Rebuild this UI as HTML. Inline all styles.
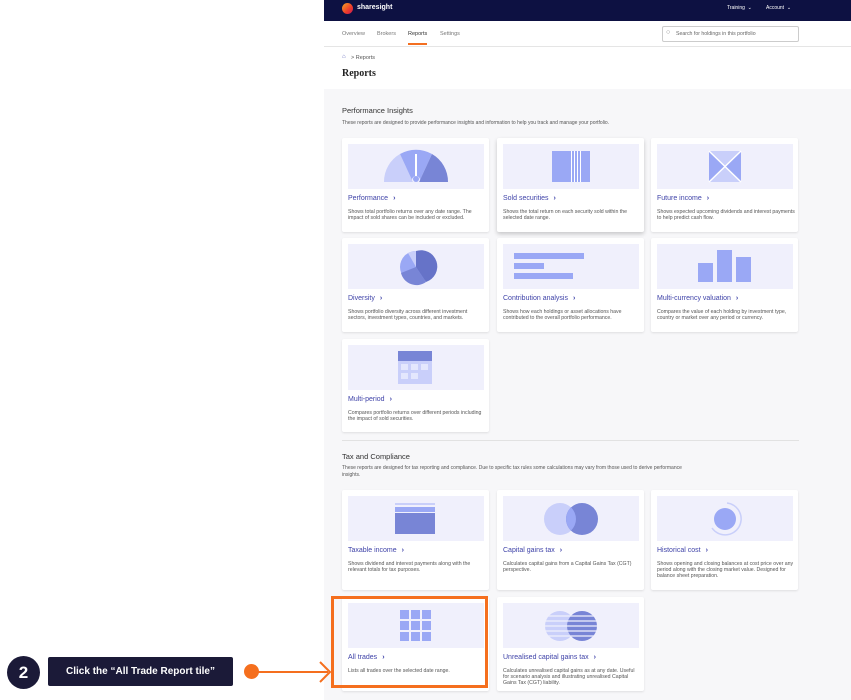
<!DOCTYPE html>
<html><head><meta charset="utf-8"><style>
*{margin:0;padding:0;box-sizing:border-box}
body{width:851px;height:700px;background:#fff;position:relative;overflow:hidden;font-family:"Liberation Sans",sans-serif}
.a{position:absolute}
.card{position:absolute;width:147px;background:#fff;border-radius:2px;box-shadow:0 1px 2px rgba(0,0,0,.1)}
.img{position:absolute;left:6px;top:6px;width:136px;height:45px;background:#f0f0fc}
.img svg{width:136px;height:45px;display:block}
.t{position:absolute;left:6px;top:57px;font-size:7px;color:#3f43a8;white-space:nowrap}
.t b{font-weight:bold;margin-left:5px;font-size:7px}
.d{position:absolute;left:6px;top:71px;width:138px;font-size:5.2px;line-height:6.2px;color:#555}
</style></head><body>
<div class="a" style="left:324px;top:0;width:527px;height:21px;background:#0d1142"></div>
<div class="a" style="left:342px;top:3px;width:11px;height:11px;border-radius:50%;background:linear-gradient(135deg,#f5a623,#ee3c2b 60%,#c2185b)"></div>
<div class="a" style="left:357px;top:4px;font-size:7px;color:#fff;font-weight:bold">sharesight</div>
<div class="a" style="left:727px;top:5px;font-size:5px;color:#fff">Training &nbsp;⌄</div>
<div class="a" style="left:766px;top:5px;font-size:5px;color:#fff">Account &nbsp;⌄</div>
<div class="a" style="left:324px;top:21px;width:527px;height:26px;border-bottom:1px solid #e5e5e5"></div>
<div class="a" style="left:342px;top:31px;font-size:5.5px;color:#777">Overview</div>
<div class="a" style="left:377px;top:31px;font-size:5.5px;color:#777">Brokers</div>
<div class="a" style="left:408px;top:31px;font-size:5.5px;color:#333">Reports</div>
<div class="a" style="left:408px;top:43px;width:19px;height:2px;background:#f36f21"></div>
<div class="a" style="left:440px;top:31px;font-size:5.5px;color:#777">Settings</div>
<div class="a" style="left:662px;top:26px;width:137px;height:16px;border:1px solid #ccc;border-radius:2px"></div>
<div class="a" style="left:666px;top:29px;font-size:7px;color:#888">○</div>
<div class="a" style="left:676px;top:31px;font-size:5.2px;color:#666">Search for holdings in this portfolio</div>
<div class="a" style="left:342px;top:54px;font-size:6px;color:#6a6fc0">⌂</div>
<div class="a" style="left:351px;top:55px;font-size:5.5px;color:#555">&gt; Reports</div>
<div class="a" style="left:342px;top:68px;font-size:10px;color:#222;font-weight:bold;font-family:'Liberation Serif',serif">Reports</div>
<div class="a" style="left:324px;top:89px;width:527px;height:611px;background:#f7f7f9"></div>
<div class="a" style="left:342px;top:106px;font-size:7.5px;color:#333">Performance Insights</div>
<div class="a" style="left:342px;top:120px;font-size:5px;color:#555">These reports are designed to provide performance insights and information to help you track and manage your portfolio.</div>
<div class="a" style="left:342px;top:440px;width:457px;height:1px;background:#e2e2e2"></div>
<div class="a" style="left:342px;top:452px;font-size:7.5px;color:#333">Tax and Compliance</div>
<div class="a" style="left:342px;top:465px;width:345px;font-size:5px;line-height:7px;color:#555">These reports are designed for tax reporting and compliance. Due to specific tax rules some calculations may vary from those used to derive performance insights.</div>

<div class="card" style="left:342px;top:138px;height:94px"><div class="img"><svg viewBox="0 0 136 45"><path d="M36 38 A32 32 0 0 1 52 10 L64 36 A3 3 0 0 0 65 38Z" fill="#c9cffa"/><path d="M52 10 A32 32 0 0 1 84 10 L72 36 A4 4 0 0 0 64 36Z" fill="#9aa8f5"/><path d="M84 10 A32 32 0 0 1 100 38 L71 38 A3 3 0 0 0 72 36Z" fill="#7885d6"/><rect x="67" y="10" width="2" height="24" fill="#fff"/><circle cx="68" cy="35" r="3" fill="#9aa8f5"/></svg></div><div class="t">Performance<b>›</b></div><div class="d">Shows total portfolio returns over any date range. The impact of sold shares can be included or excluded.</div></div>
<div class="card" style="left:497px;top:138px;height:94px;box-shadow:0 2px 4px rgba(0,0,0,.2)"><div class="img"><svg viewBox="0 0 136 45"><rect x="49" y="7" width="38" height="31" fill="#9aa8f5"/><rect x="68" y="7" width="1" height="31" fill="#fff"/><rect x="71" y="7" width="1" height="31" fill="#fff"/><rect x="74" y="7" width="1" height="31" fill="#fff"/><rect x="77" y="7" width="1" height="31" fill="#fff"/></svg></div><div class="t">Sold securities<b>›</b></div><div class="d">Shows the total return on each security sold within the selected date range.</div></div>
<div class="card" style="left:651px;top:138px;height:94px"><div class="img"><svg viewBox="0 0 136 45"><rect x="52" y="7" width="32" height="31" fill="#c9cffa"/><path d="M52 7 L68 22 L52 38Z M84 7 L68 22 L84 38Z" fill="#9aa8f5"/><path d="M52 7 L84 38 M84 7 L52 38" stroke="#fff" stroke-width="1.5"/></svg></div><div class="t">Future income<b>›</b></div><div class="d">Shows expected upcoming dividends and interest payments to help predict cash flow.</div></div>

<div class="card" style="left:342px;top:238px;height:94px"><div class="img"><svg viewBox="0 0 136 45"><circle cx="68" cy="23" r="16" fill="#9aa8f5"/><path d="M68 23 L68 7 A16 16 0 0 1 78 38Z" fill="#6673c8"/><path d="M68 23 L78 38 A16 16 0 0 1 53 29Z" fill="#7885d6"/><path d="M68 23 L60 9 A16 16 0 0 1 68 7Z" fill="#c9cffa"/></svg></div><div class="t">Diversity<b>›</b></div><div class="d">Shows portfolio diversity across different investment sectors, investment types, countries, and markets.</div></div>
<div class="card" style="left:497px;top:238px;height:94px"><div class="img"><svg viewBox="0 0 136 45"><rect x="11" y="9" width="70" height="6" fill="#9aa8f5"/><rect x="11" y="19" width="30" height="6" fill="#9aa8f5"/><rect x="11" y="29" width="59" height="6" fill="#9aa8f5"/></svg></div><div class="t">Contribution analysis<b>›</b></div><div class="d">Shows how each holdings or asset allocations have contributed to the overall portfolio performance.</div></div>
<div class="card" style="left:651px;top:238px;height:94px"><div class="img"><svg viewBox="0 0 136 45"><rect x="41" y="19" width="15" height="19" fill="#9aa8f5"/><rect x="60" y="6" width="15" height="32" fill="#9aa8f5"/><rect x="79" y="13" width="15" height="25" fill="#9aa8f5"/></svg></div><div class="t">Multi-currency valuation<b>›</b></div><div class="d">Compares the value of each holding by investment type, country or market over any period or currency.</div></div>

<div class="card" style="left:342px;top:339px;height:93px"><div class="img"><svg viewBox="0 0 136 45"><rect x="50" y="6" width="34" height="33" fill="#c9cffa"/><rect x="50" y="6" width="34" height="10" fill="#7885d6"/><rect x="53" y="19" width="7" height="6" fill="#e4e7fd"/><rect x="63" y="19" width="7" height="6" fill="#e4e7fd"/><rect x="73" y="19" width="7" height="6" fill="#e4e7fd"/><rect x="53" y="28" width="7" height="6" fill="#e4e7fd"/><rect x="63" y="28" width="7" height="6" fill="#e4e7fd"/></svg></div><div class="t">Multi-period<b>›</b></div><div class="d">Compares portfolio returns over different periods including the impact of sold securities.</div></div>

<div class="card" style="left:342px;top:490px;height:100px"><div class="img"><svg viewBox="0 0 136 45"><rect x="47" y="7" width="40" height="2" fill="#c9cffa"/><rect x="47" y="11" width="40" height="5" fill="#9aa8f5"/><rect x="47" y="17" width="40" height="21" fill="#7885d6"/></svg></div><div class="t">Taxable income<b>›</b></div><div class="d">Shows dividend and interest payments along with the relevant totals for tax purposes.</div></div>
<div class="card" style="left:497px;top:490px;height:100px"><div class="img"><svg viewBox="0 0 136 45"><circle cx="57" cy="23" r="16" fill="#c9cffa"/><circle cx="79" cy="23" r="16" fill="#7885d6"/><path d="M68 11.4 A16 16 0 0 1 68 34.6 A16 16 0 0 1 68 11.4Z" fill="#9aa8f5"/></svg></div><div class="t">Capital gains tax<b>›</b></div><div class="d">Calculates capital gains from a Capital Gains Tax (CGT) perspective.</div></div>
<div class="card" style="left:651px;top:490px;height:100px"><div class="img"><svg viewBox="0 0 136 45"><circle cx="68" cy="23" r="11" fill="#9aa8f5"/><path d="M70 7 A16 16 0 1 1 55 32" stroke="#c9cffa" stroke-width="1.5" fill="none"/></svg></div><div class="t">Historical cost<b>›</b></div><div class="d">Shows opening and closing balances at cost price over any period along with the closing market value. Designed for balance sheet preparation.</div></div>

<div class="card" style="left:342px;top:597px;height:94px"><div class="img"><svg viewBox="0 0 136 45"><g fill="#9aa8f5"><rect x="52" y="7" width="9" height="9"/><rect x="63" y="7" width="9" height="9"/><rect x="74" y="7" width="9" height="9"/><rect x="52" y="18" width="9" height="9"/><rect x="63" y="18" width="9" height="9"/><rect x="74" y="18" width="9" height="9"/><rect x="52" y="29" width="9" height="9"/><rect x="63" y="29" width="9" height="9"/><rect x="74" y="29" width="9" height="9"/></g></svg></div><div class="t">All trades<b>›</b></div><div class="d">Lists all trades over the selected date range.</div></div>
<div class="card" style="left:497px;top:597px;height:94px"><div class="img"><svg viewBox="0 0 136 45"><circle cx="57" cy="23" r="15" fill="#c9cffa"/><circle cx="79" cy="23" r="15" fill="#7885d6"/><g stroke="#f0f0fc" stroke-width="1.2"><line x1="40" y1="13" x2="96" y2="13"/><line x1="40" y1="18" x2="96" y2="18"/><line x1="40" y1="23" x2="96" y2="23"/><line x1="40" y1="28" x2="96" y2="28"/><line x1="40" y1="33" x2="96" y2="33"/></g></svg></div><div class="t">Unrealised capital gains tax<b>›</b></div><div class="d">Calculates unrealised capital gains as at any date. Useful for scenario analysis and illustrating unrealised Capital Gains Tax (CGT) liability.</div></div>

<div class="a" style="left:331px;top:596px;width:157px;height:92px;border:3px solid #f56f1e"></div>
<div class="a" style="left:7px;top:656px;width:33px;height:33px;border-radius:50%;background:#1b1a38;color:#fff;font-size:17px;font-weight:bold;text-align:center;line-height:33px">2</div>
<div class="a" style="left:48px;top:657px;width:185px;height:29px;background:#1b1a38;border-radius:2px;color:#fff;font-size:10px;font-weight:bold;line-height:29px;text-align:center">Click the “All Trade Report tile”</div>
<div class="a" style="left:244px;top:664px;width:15px;height:15px;border-radius:50%;background:#f56f1e"></div>
<div class="a" style="left:255px;top:671px;width:73px;height:2px;background:#f56f1e"></div>
<svg class="a" style="left:318px;top:661px" width="14" height="22"><path d="M2 1 L12 11 L2 21" stroke="#f56f1e" stroke-width="2" fill="none"/></svg>
</body></html>
